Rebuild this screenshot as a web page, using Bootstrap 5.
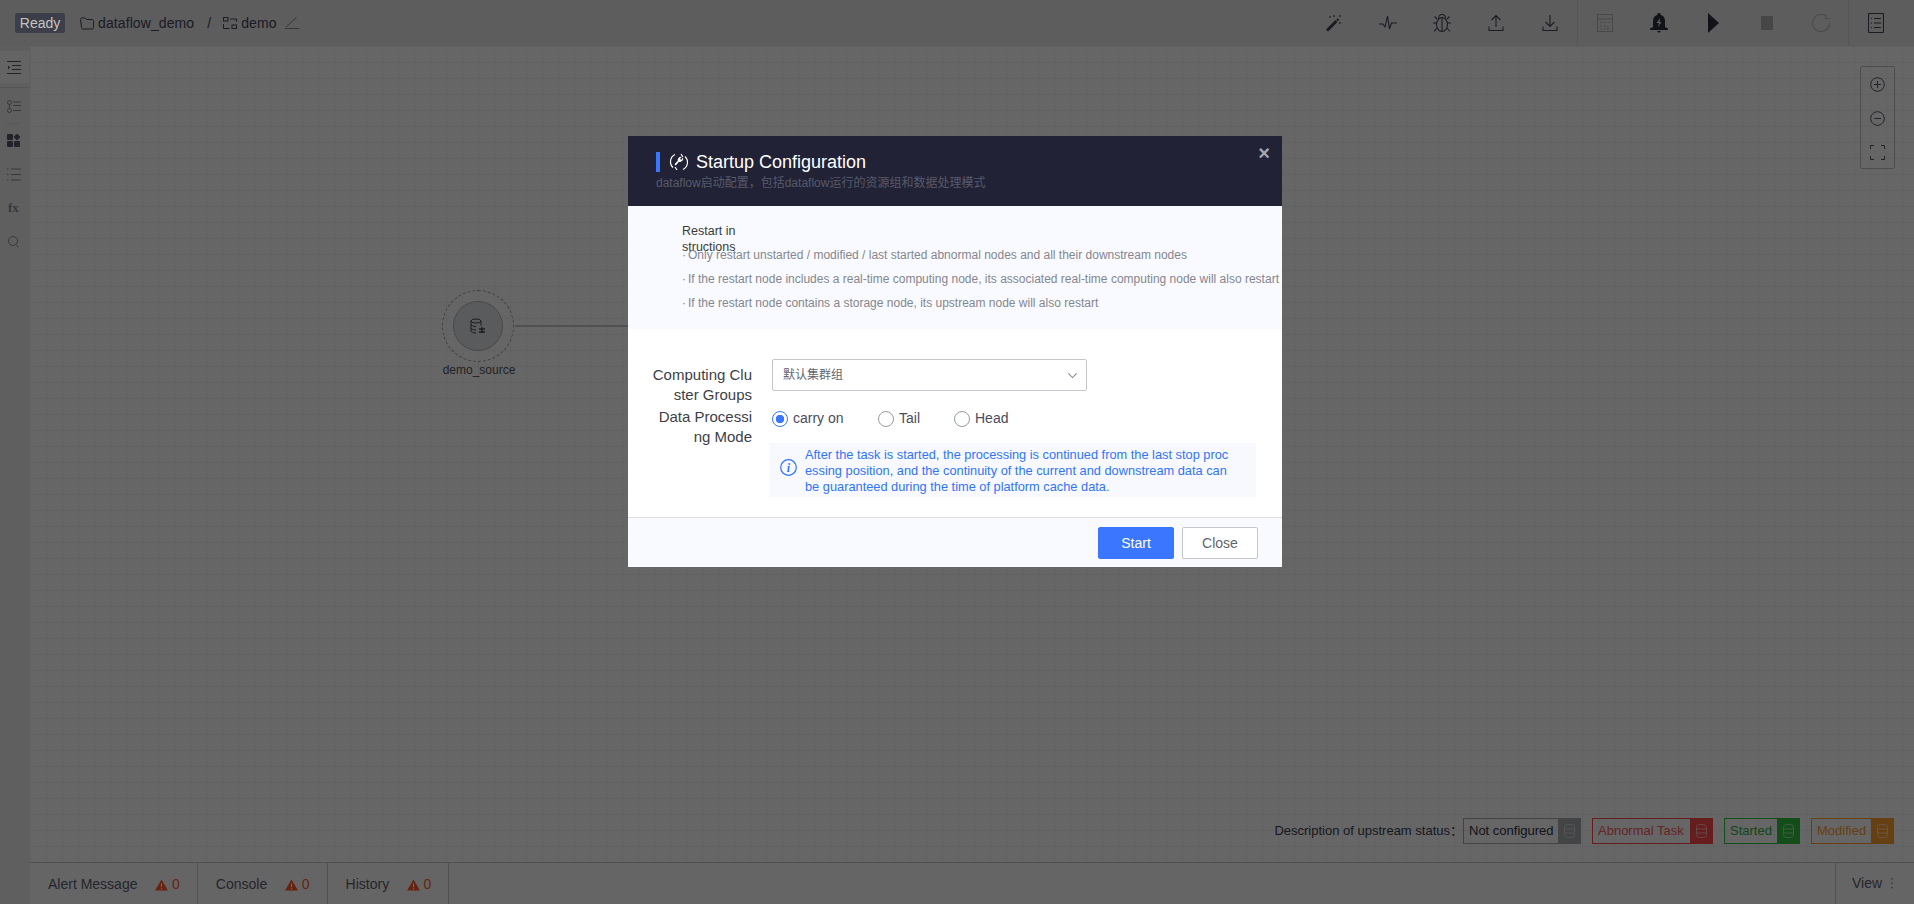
<!DOCTYPE html>
<html lang="en">
<head>
<meta charset="UTF-8">
<title>Dataflow - Startup Configuration</title>
<link href="https://cdn.jsdelivr.net/npm/bootstrap@5.3.3/dist/css/bootstrap.min.css" rel="stylesheet">
<style>
html, body { height: 100%; }
body { font-family: "Liberation Sans", "Noto Sans CJK SC", sans-serif; font-size: 14px; color: #4a4c60; overflow: hidden; background: #fff; }
svg { display: block; }

/* top bar */
.df-top { height: 46px; background: #e8e8e8; }
.df-ready { margin-left: 15px; width: 50px; height: 20px; line-height: 20px; text-align: center; background: #3c3e49; color: #c4c4c4; border-radius: 2px; position: relative; z-index: 1060; }
.df-crumb { line-height: 16px; color: #45475a; }
.df-crumb-folder { margin-left: 15px; }
.df-crumb-name { letter-spacing: .1px; }
.df-crumb-slash { margin: 0 12px 0 13px; }
.df-tool { width: 54px; display: flex; justify-content: center; }
.df-tool-end { width: 65px; padding-right: 11px; }
.df-sep { width: 1px; height: 46px; background: #d6d6d6; }

/* left rail */
.df-rail { width: 30px; background: #eeeeee; }
.df-rail-on { width: 29px; height: 32px; margin-top: 5px; padding-left: 7px; background: #fafafa; }
.df-rail-line { height: 1px; background: #d8d8d8; margin: 4px 0 0; }
.df-rail-short { width: 12px; height: 1px; background: #d8d8d8; margin: 0 0 0 7px; }
.df-rail-item { height: 34px; display: flex; align-items: center; padding-left: 7px; }
.df-rail-first { margin-top: 1px; }
.df-rail-apps { height: 33px; }
.df-rail-fx { padding-left: 8px; font-family: "Liberation Serif", serif; font-weight: 700; font-size: 13px; color: #8a8c98; }
.df-rail-find { padding-left: 8px; }

/* canvas */
.df-canvas { background-color: #fff; background-image: linear-gradient(#f4f4f4 1px, transparent 1px), linear-gradient(90deg, #f4f4f4 1px, transparent 1px); background-size: 16px 16px; }
.df-node { left: 412px; top: 244px; width: 72px; height: 72px; border: 1px dashed #9a9a9a; border-radius: 50%; }
.df-node-in { width: 50px; height: 50px; border-radius: 50%; background: #e2e4e8; border: 1px solid #b4b4b4; }
.df-node-link { left: 485px; top: 279px; width: 200px; height: 2px; background: #c8c8c8; }
.df-node-name { left: 409px; top: 316px; width: 80px; text-align: center; font-size: 12px; line-height: 16px; color: #55565e; }
.df-zoombox { right: 19px; top: 20px; width: 35px; height: 103px; border: 1px solid #c4c4c4; border-radius: 2px; }
.df-zoombtn { height: 34px; }
.df-legend { right: 20px; bottom: 18px; font-size: 13px; color: #3e404e; }
.df-tag { height: 26px; border: 1px solid; line-height: 24px; font-size: 13px; padding-left: 5px; margin-left: 11px; }
.df-tag-ico { width: 23px; height: 26px; margin: -1px -1px -1px 0; }
.df-tag-none { width: 118px; margin-left: 0; border-color: #a8a8a8; color: #303240; }
.df-tag-none .df-tag-ico { background: #a8aab0; }
.df-tag-bad { width: 121px; border-color: #ff4a4a; color: #ff5a5a; }
.df-tag-bad .df-tag-ico { background: #ff4a4a; }
.df-tag-run { width: 76px; border-color: #30c040; color: #30b040; }
.df-tag-run .df-tag-ico { background: #30c040; }
.df-tag-mod { width: 83px; border-color: #ffa030; color: #ffa030; }
.df-tag-mod .df-tag-ico { background: #ffa030; }

/* bottom bar */
.df-bottom { height: 42px; border-top: 1px solid #c8c8c8; background: #fdfdfd; color: #5a5c70; }
.df-tab { padding: 2px 17px 0 18px; border-right: 1px solid #c8c8c8; height: 41px; }
.df-tab-alert { width: 107px; }
.df-tab-console { width: 69px; }
.df-tab-history { width: 61px; }
.df-warn { color: #ff5a2a; }
.df-view { width: 79px; border-left: 1px solid #c8c8c8; height: 41px; padding-left: 16px; }

/* startup modal */
.modal-backdrop.show { opacity: .6; }
.df-dialog { max-width: 654px; margin: 136px auto 0; }
.modal.d-block .df-dialog { transform: translateX(-2px); }
.df-modal { border: 0; border-radius: 0; }
.df-head { height: 70px; background: #212236; padding: 16px 28px 0; position: relative; }
.df-head-bar { width: 4px; height: 20px; background: #3a76ff; }
.df-head-ico { margin: 0 7px 0 9px; }
.df-head-title { font-size: 18px; line-height: 20px; color: #fff; }
.df-head-sub { font-size: 12px; line-height: 16px; margin-top: 3px; color: #585a6b; }
.df-x { right: 12px; top: 9px; color: #a4a6b2; font-size: 20px; line-height: 16px; font-weight: 700; }
.df-notes { height: 123px; background: #f9faff; padding: 17px 0 0 54px; font-size: 12px; }
.df-notes-title { width: 59px; height: 20px; font-size: 12.500px; line-height: 16px; color: #3a3a3a; word-break: break-all; }
.df-notes-item { line-height: 24px; color: #84868f; white-space: nowrap; }
.df-notes-item::before { content: "·"; display: inline-block; width: 6px; }
.df-form { height: 188px; padding: 36px 26px 0 24px; }
.df-row-group { height: 42px; }
.df-label { width: 100px; flex: none; text-align: right; font-size: 15px; line-height: 20px; color: #3d3f48; word-break: break-all; margin-right: 20px; }
.df-select { width: 315px; height: 32px; margin-top: -6px; font-size: 12px; color: #63656e; padding: 0 30px 0 10px; border-color: #c4c6cc; border-radius: 2px; background-size: 11px; background-position: right 8px center; background-image: url("data:image/svg+xml,%3csvg xmlns='http://www.w3.org/2000/svg' viewBox='0 0 16 16'%3e%3cpath fill='none' stroke='%23888' stroke-width='1.500' d='M2 5l6 6 6-6'/%3e%3c/svg%3e"); }
.df-modes { height: 23px; }
.df-modes label { margin-left: 5px; }
.df-mode-carry { width: 85px; }
.df-mode-tail { width: 55px; }
.df-radio { margin: 0; width: 16px; height: 16px; border-color: #979ba5; }
.df-radio:checked { background-color: #fff; border-color: #3a76ff; background-image: radial-gradient(circle, #3a76ff 0 4px, transparent 4.5px); }
.df-note { width: 487px; height: 54px; margin: 13px 0 0 -3px; padding: 4px 10px 0 0; background: #f7f9ff; color: #2f74ff; font-size: 12.800px; line-height: 16px; white-space: nowrap; }
.df-note-ico { margin: 12px 8px 0 11px; }
.df-foot { height: 50px; background: #f9faff; border-top: 1px solid #dcdee5; padding: 9px 24px 0 0; }
.df-btn { width: 76px; height: 32px; padding: 0; font-size: 14px; border-radius: 2px; }
.df-btn-go { background: #3a76ff; border-color: #3a76ff; color: #fff; }
.df-btn-no { background: #fff; border-color: #c4c6cc; color: #63656e; }
</style>
</head>
<body>

<div class="d-flex flex-column h-100">
  <!-- Top bar -->
  <div class="df-top d-flex align-items-center flex-shrink-0">
    <div class="df-ready">Ready</div>
    <div class="df-crumb d-flex align-items-center">
      <svg class="df-crumb-folder" width="14" height="14" viewBox="0 0 14 14" fill="none" stroke="#45475a"><path d="M.5 3.500c0-1 .5-1.500 1.500-1.500h3l1.500 1.500h5.500c1 0 1.500.5 1.500 1.500v6.500c0 1-.5 1.500-1.500 1.500h-9c-1 0-1.500-.5-1.500-1.500z"/></svg>
      <span class="df-crumb-name ms-1">dataflow_demo</span>
      <span class="df-crumb-slash">/</span>
      <svg width="14" height="14" viewBox="0 0 14 14" fill="none" stroke="#45475a"><rect x=".5" y="1.500" width="4.500" height="3.500"/><rect x="9" y="9" width="4.500" height="3.500"/><path d="M7 3h6.500v3M.5 8v4.500h6"/></svg>
      <span class="df-crumb-name ms-1">demo</span>
      <svg class="ms-2" width="14" height="14" viewBox="0 0 14 14" fill="none" stroke="#8a8a8e"><path d="M0 12.500h14M1 11L11.500 1.500"/></svg>
    </div>

    <div class="ms-auto d-flex align-items-center">
      <div class="df-tool"><svg width="18" height="18" viewBox="0 0 18 18"><path d="M1 15.500L10.500 6l2 2L3 17.500z" fill="#3f4150"/><path d="M12 5l1.500 1.500" stroke="#3f4150" stroke-width="2"/><path d="M4 3h2M5 2v2M14 9h2M15 8v2M9 1v2M8 2h2M15 1v2M14 2h2" stroke="#55576a" stroke-width=".8"/></svg></div>
      <div class="df-tool"><svg width="18" height="18" viewBox="0 0 18 18" fill="none" stroke="#45475a" stroke-width="1.100"><path d="M0 10h4l2 3 2.500-11 2 13 2-6h5.500"/></svg></div>
      <div class="df-tool"><svg width="20" height="20" viewBox="0 0 20 20" fill="none" stroke="#45475a" stroke-width="1.100"><ellipse cx="10" cy="11.500" rx="5.500" ry="7"/><path d="M10 4.500v14M6.500 5.500C6.500 3 8 1.500 10 1.500s3.500 1.500 3.500 4M4.500 10H1M15.500 10H19M5 15l-3 3.500M15 15l3 3.500M5 6L2.500 3.500M15 6l2.500-2.500"/></svg></div>
      <div class="df-tool"><svg width="18" height="18" viewBox="0 0 18 18" fill="none" stroke="#45475a" stroke-width="1.100"><path d="M9 13V1.500M4.500 6L9 1.500 13.500 6M2 12.500v4h14v-4"/></svg></div>
      <div class="df-tool"><svg width="18" height="18" viewBox="0 0 18 18" fill="none" stroke="#45475a" stroke-width="1.100"><path d="M9 1v11.500M4.500 8L9 12.500 13.500 8M2 12.500v4h14v-4"/></svg></div>
      <div class="df-sep"></div>
      <div class="df-tool"><svg width="16" height="18" viewBox="0 0 16 18" fill="none" stroke="#b4b4b4"><rect x=".5" y=".5" width="15" height="17"/><path d="M.5 5h15M3 8.500h2M7 8.500h2M11 8.500h2M3 12h2M7 12h2M3 15h2M7 15h2M11 12v4"/></svg></div>
      <div class="df-tool"><svg width="18" height="20" viewBox="0 0 18 20"><path d="M9 0a1.500 1.500 0 0 1 1.500 1.800C13.500 2.600 15 5 15 8v6l3 1.500V17H0v-1.500L3 14V8c0-3 1.500-5.400 4.500-6.200A1.500 1.500 0 0 1 9 0z" fill="#2f3140"/><path d="M7 18h4l-2 2z" fill="#2f3140"/><path d="M10 5L6.500 10h2.500l-1 4 3.500-5H9.500z" fill="#e8e8e8"/></svg></div>
      <div class="df-tool"><svg width="11" height="20" viewBox="0 0 11 20"><path d="M0 0l11 10L0 20z" fill="#2f3140"/></svg></div>
      <div class="df-tool"><svg width="12" height="14" viewBox="0 0 12 14"><rect width="12" height="14" fill="#b0b0b0"/></svg></div>
      <div class="df-tool"><svg width="20" height="20" viewBox="0 0 20 20" fill="none" stroke="#bcbcbc" stroke-width="1.100"><path d="M14 2.500A8.500 8.500 0 1 0 18.500 10M14.500 1v4.500H19"/></svg></div>
      <div class="df-sep"></div>
      <div class="df-tool df-tool-end"><svg width="16" height="20" viewBox="0 0 16 20" fill="none" stroke="#45475a" stroke-width="1.100"><rect x=".5" y=".5" width="15" height="19" rx="1"/><path d="M3 5.500h1M6 5.500h7M3 10h1M6 10h7M3 14.500h1M6 14.500h7"/></svg></div>
    </div>
  </div>

  <div class="d-flex flex-grow-1">
    <!-- Left rail -->
    <div class="df-rail">
      <div class="df-rail-on d-flex align-items-center">
        <svg width="14" height="13" viewBox="0 0 14 13" fill="none" stroke="#55576a"><path d="M0 .5h14M5 4.500h9M5 8.500h9M0 12.500h14"/><path d="M1 4.500l2 2-2 2z" fill="#55576a" stroke="none"/></svg>
      </div>
      <div class="df-rail-line"></div>
      <div class="df-rail-item df-rail-first">
        <svg width="14" height="13" viewBox="0 0 14 13" fill="none" stroke="#8a8c98"><circle cx="2.500" cy="2.500" r="2"/><circle cx="2.500" cy="10.500" r="2"/><path d="M2.500 4.500v4M6 2h8M6 5.500h8M6 10.500h8"/></svg>
      </div>
      <div class="df-rail-short"></div>
      <div class="df-rail-item df-rail-apps">
        <svg width="13" height="13" viewBox="0 0 13 13" fill="#55576a"><rect width="6" height="6" rx="1"/><rect x="7" y="7" width="6" height="6" rx="1"/><rect y="7" width="6" height="6" rx="1"/><rect x="7.500" y=".5" width="5" height="5" rx=".5" transform="rotate(45 10 3)"/></svg>
      </div>
      <div class="df-rail-item">
        <svg width="14" height="13" viewBox="0 0 14 13" fill="none" stroke="#8a8c98"><path d="M0 1h1.500M4 1h10M0 6.500h1.500M4 6.500h10M0 12h1.500M4 12h10"/></svg>
      </div>
      <div class="df-rail-item df-rail-fx">fx</div>
      <div class="df-rail-item df-rail-find">
        <svg width="11" height="12" viewBox="0 0 11 12" fill="none" stroke="#8a8c98"><circle cx="5" cy="5" r="4.500"/><path d="M8 8.500l2.500 3"/></svg>
      </div>
    </div>

    <div class="d-flex flex-column flex-grow-1">
      <!-- Canvas -->
      <div class="df-canvas flex-grow-1 position-relative">
        <div class="df-node position-absolute d-flex align-items-center justify-content-center">
          <div class="df-node-in d-flex align-items-center justify-content-center">
            <svg width="16" height="16" viewBox="0 0 16 16" fill="none" stroke="#45475a"><ellipse cx="6" cy="3" rx="5" ry="2"/><path d="M1 3v10c0 1 2 2 5 2M11 3v5M1 6.500c0 1 2 2 5 2M1 10c0 1 2 2 5 2"/><path d="M9 11h6M9 14h6M12 9v6" stroke-width="1.300"/></svg>
          </div>
        </div>
        <div class="df-node-link position-absolute"></div>
        <div class="df-node-name position-absolute">demo_source</div>

        <div class="df-zoombox position-absolute">
          <div class="df-zoombtn d-flex align-items-center justify-content-center"><svg width="15" height="15" viewBox="0 0 15 15" fill="none" stroke="#55576a"><circle cx="7.500" cy="7.500" r="6.800"/><path d="M7.500 4v7M4 7.500h7"/></svg></div>
          <div class="df-zoombtn d-flex align-items-center justify-content-center"><svg width="15" height="15" viewBox="0 0 15 15" fill="none" stroke="#55576a"><circle cx="7.500" cy="7.500" r="6.800"/><path d="M4 7.500h7"/></svg></div>
          <div class="df-zoombtn d-flex align-items-center justify-content-center"><svg width="15" height="15" viewBox="0 0 15 15" fill="none" stroke="#55576a"><path d="M.5 4V.5H4M11 .5h3.500V4M14.500 11v3.500H11M4 14.500H.5V11"/></svg></div>
        </div>

        <!-- Upstream status legend -->
        <div class="df-legend position-absolute d-flex align-items-center">
          <span>Description of upstream status：</span>
          <div class="df-tag df-tag-none d-flex"><span class="flex-grow-1">Not configured</span><div class="df-tag-ico d-flex align-items-center justify-content-center"><svg width="11" height="14" viewBox="0 0 11 14" fill="none" stroke="#d4d4d4"><rect x=".5" y=".5" width="10" height="13" rx="3"/><path d="M.5 5h10M.5 9h10"/></svg></div></div>
          <div class="df-tag df-tag-bad d-flex"><span class="flex-grow-1">Abnormal Task</span><div class="df-tag-ico d-flex align-items-center justify-content-center"><svg width="11" height="14" viewBox="0 0 11 14" fill="none" stroke="#ffb0b0"><rect x=".5" y=".5" width="10" height="13" rx="3"/><path d="M.5 5h10M.5 9h10"/></svg></div></div>
          <div class="df-tag df-tag-run d-flex"><span class="flex-grow-1">Started</span><div class="df-tag-ico d-flex align-items-center justify-content-center"><svg width="11" height="14" viewBox="0 0 11 14" fill="none" stroke="#a8e0b0"><rect x=".5" y=".5" width="10" height="13" rx="3"/><path d="M.5 5h10M.5 9h10"/></svg></div></div>
          <div class="df-tag df-tag-mod d-flex"><span class="flex-grow-1">Modified</span><div class="df-tag-ico d-flex align-items-center justify-content-center"><svg width="11" height="14" viewBox="0 0 11 14" fill="none" stroke="#ffd8a8"><rect x=".5" y=".5" width="10" height="13" rx="3"/><path d="M.5 5h10M.5 9h10"/></svg></div></div>
        </div>
      </div>

      <!-- Bottom tabs -->
      <div class="df-bottom d-flex align-items-center">
        <div class="df-tab d-flex align-items-center"><span class="df-tab-alert">Alert Message</span><svg width="13" height="12" viewBox="0 0 14 12"><path d="M7 0l7 12H0z" fill="#ff5a2a"/><path d="M6.400 4h1.200v4.500H6.400zM6.400 9.300h1.200v1.200H6.400z" fill="#fff"/></svg><span class="df-warn ms-1">0</span></div>
        <div class="df-tab d-flex align-items-center"><span class="df-tab-console">Console</span><svg width="13" height="12" viewBox="0 0 14 12"><path d="M7 0l7 12H0z" fill="#ff5a2a"/><path d="M6.400 4h1.200v4.500H6.400zM6.400 9.300h1.200v1.200H6.400z" fill="#fff"/></svg><span class="df-warn ms-1">0</span></div>
        <div class="df-tab d-flex align-items-center"><span class="df-tab-history">History</span><svg width="13" height="12" viewBox="0 0 14 12"><path d="M7 0l7 12H0z" fill="#ff5a2a"/><path d="M6.400 4h1.200v4.500H6.400zM6.400 9.300h1.200v1.200H6.400z" fill="#fff"/></svg><span class="df-warn ms-1">0</span></div>
        <div class="df-view ms-auto d-flex align-items-center"><span>View</span><svg class="ms-2" width="3" height="11" viewBox="0 0 3 11" fill="#8a8c98"><rect x="1" y="0" width="1.500" height="1.500"/><rect x="1" y="4.500" width="1.500" height="1.500"/><rect x="1" y="9" width="1.500" height="1.500"/></svg></div>
      </div>
    </div>
  </div>
</div>

<div class="modal-backdrop show"></div>

<!-- Startup configuration dialog -->
<div class="modal d-block" tabindex="-1">
  <div class="modal-dialog df-dialog">
    <div class="modal-content df-modal">
      <div class="df-head">
        <div class="d-flex align-items-center">
          <div class="df-head-bar"></div>
          <svg class="df-head-ico" width="20" height="20" viewBox="0 0 20 20" fill="none" stroke="#fff" stroke-width="1.200"><path d="M6 2.500A8 8 0 0 0 4 15.500M14 17.500A8 8 0 0 0 16 4.500M14 5L12 2M6 15l2 3"/><path d="M14 5.500a3.200 3.200 0 0 1-4 4.200L6.800 13.500l-1.300-1.300 3.300-3.400a3.200 3.200 0 0 1 4-3.900L11 6.800l1.200 1.200z" fill="#fff" stroke="none"/></svg>
          <div class="df-head-title">Startup Configuration</div>
        </div>
        <div class="df-head-sub">dataflow启动配置，包括dataflow运行的资源组和数据处理模式</div>
        <div class="df-x position-absolute">×</div>
      </div>

      <div class="df-notes">
        <div class="df-notes-title">Restart instructions</div>
        <div class="df-notes-item">Only restart unstarted / modified / last started abnormal nodes and all their downstream nodes</div>
        <div class="df-notes-item">If the restart node includes a real-time computing node, its associated real-time computing node will also restart</div>
        <div class="df-notes-item">If the restart node contains a storage node, its upstream node will also restart</div>
      </div>

      <div class="df-form">
        <div class="d-flex df-row-group">
          <div class="df-label">Computing Cluster Groups</div>
          <select class="form-select df-select"><option>默认集群组</option></select>
        </div>
        <div class="d-flex">
          <div class="df-label">Data Processing Mode</div>
          <div>
            <div class="df-modes d-flex align-items-center">
              <input class="form-check-input df-radio" type="radio" name="mode" id="modeCarry" checked>
              <label class="df-mode-carry" for="modeCarry">carry on</label>
              <input class="form-check-input df-radio" type="radio" name="mode" id="modeTail">
              <label class="df-mode-tail" for="modeTail">Tail</label>
              <input class="form-check-input df-radio" type="radio" name="mode" id="modeHead">
              <label for="modeHead">Head</label>
            </div>
            <div class="df-note d-flex">
              <svg class="df-note-ico flex-shrink-0" width="17" height="17" viewBox="0 0 17 17"><circle cx="8.500" cy="8.500" r="7.800" fill="none" stroke="#2f74ff" stroke-width="1.200"/><text x="8.500" y="13" text-anchor="middle" font-family="Liberation Serif" font-style="italic" font-weight="700" font-size="12" fill="#2f74ff">i</text></svg>
              <div>After the task is started, the processing is continued from the last stop proc<br>essing position, and the continuity of the current and downstream data can<br>be guaranteed during the time of platform cache data.</div>
            </div>
          </div>
        </div>
      </div>

      <div class="df-foot d-flex justify-content-end gap-2">
        <button class="btn df-btn df-btn-go">Start</button>
        <button class="btn df-btn df-btn-no">Close</button>
      </div>
    </div>
  </div>
</div>

<script src="https://cdn.jsdelivr.net/npm/bootstrap@5.3.3/dist/js/bootstrap.bundle.min.js"></script>
</body>
</html>
